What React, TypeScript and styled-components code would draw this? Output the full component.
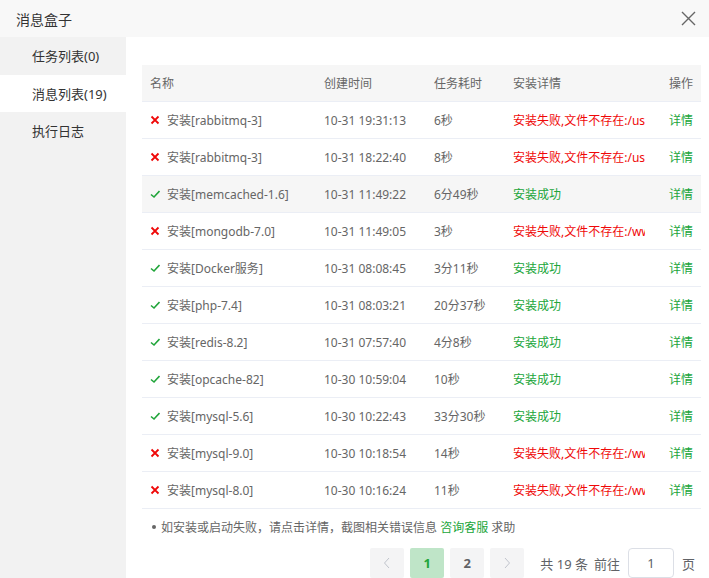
import styled, { createGlobalStyle } from 'styled-components';

const GlobalStyle = createGlobalStyle`
  html, body {
    margin: 0;
    padding: 0;
    overflow: hidden;
    background: #fff;
  }
  body {
    font-family: "Noto Sans", "Noto Sans CJK SC", sans-serif;
    font-size: 12px;
    color: #666;
  }
`;

const Dialog = styled.div`
  display: flex;
  flex-direction: column;
  width: 709px;
  height: 578px;
  overflow: hidden;
`;

const Header = styled.div`
  display: flex;
  align-items: center;
  justify-content: space-between;
  height: 37px;
  flex-shrink: 0;
  padding: 0 12px 0 16px;
  box-sizing: border-box;
  background: #f8f8f8;
  font-size: 14px;
  color: #333;
`;

const CloseButton = styled.button`
  display: flex;
  align-items: center;
  justify-content: center;
  width: 18px;
  height: 18px;
  padding: 0;
  border: none;
  background: none;
  cursor: pointer;
`;

const Body = styled.div`
  display: flex;
  flex: 1;
  min-height: 0;
`;

const Sidebar = styled.nav`
  width: 126px;
  flex-shrink: 0;
  background: #f2f2f2;
`;

const Tab = styled.div<{ $active?: boolean }>`
  height: 37.5px;
  display: flex;
  align-items: center;
  padding-left: 32px;
  font-size: 13px;
  color: #333;
  background: ${(p) => (p.$active ? '#fff' : 'transparent')};
  cursor: pointer;
`;

const Main = styled.div`
  flex: 1;
  min-width: 0;
  padding: 28px 8px 0 16px;
  display: flex;
  flex-direction: column;
`;

const Table = styled.table`
  width: 559px;
  table-layout: fixed;
  border-collapse: collapse;
`;

const Th = styled.th<{ $right?: boolean }>`
  height: 36px;
  padding: 0 8px;
  background: #f6f6f6;
  font-weight: normal;
  color: #666;
  text-align: ${(p) => (p.$right ? 'right' : 'left')};
  border-bottom: 1px solid #ebeef5;
  white-space: nowrap;
`;

const Tr = styled.tr<{ $hover?: boolean }>`
  background: ${(p) => (p.$hover ? '#f6f6f6' : '#fff')};
`;

const Td = styled.td<{ $right?: boolean }>`
  height: 36px;
  padding: 0 8px;
  border-bottom: 1px solid #ebeef5;
  white-space: nowrap;
  overflow: hidden;
  text-align: ${(p) => (p.$right ? 'right' : 'left')};
  color: #666;
`;

const NameCell = styled.span`
  display: inline-flex;
  align-items: center;
  gap: 7px;
`;

const Detail = styled.div<{ $ok: boolean }>`
  overflow: hidden;
  white-space: nowrap;
  color: ${(p) => (p.$ok ? '#20a53a' : '#ef0808')};
`;

const Link = styled.a`
  color: #20a53a;
  text-decoration: none;
  cursor: pointer;
`;

const Note = styled.div`
  display: flex;
  align-items: center;
  gap: 5px;
  margin-top: 8px;
  padding-left: 10px;
  height: 20px;
  color: #666;
`;

const Dot = styled.span`
  width: 4px;
  height: 4px;
  border-radius: 50%;
  background: #666;
`;

const Pager = styled.div`
  display: flex;
  align-items: center;
  justify-content: flex-end;
  margin-top: 12px;
  margin-right: 6px;
  height: 30px;
  font-size: 13px;
  color: #606266;
`;

const PageBtn = styled.button<{ $active?: boolean }>`
  width: 34px;
  height: 30px;
  margin-right: 6px;
  border: none;
  border-radius: 2px;
  padding: 0;
  display: flex;
  align-items: center;
  justify-content: center;
  font-family: inherit;
  font-size: 13px;
  font-weight: bold;
  background: ${(p) => (p.$active ? '#bfe5c8' : '#f4f4f5')};
  color: ${(p) => (p.$active ? '#20a53a' : '#606266')};
  cursor: pointer;
`;

const Total = styled.span`
  margin-left: 10px;
  margin-right: 6px;
`;

const JumpInput = styled.input`
  width: 46px;
  height: 30px;
  box-sizing: border-box;
  margin: 0 8px;
  border: 1px solid #dcdfe6;
  border-radius: 4px;
  text-align: center;
  font-family: inherit;
  font-size: 13px;
  color: #606266;
  outline: none;
`;

const Cross = () => (
  <svg width="10" height="10" viewBox="0 0 10 10">
    <path d="M1.5 1.5 L8.5 8.5 M8.5 1.5 L1.5 8.5" stroke="#ef0808" strokeWidth="1.8" />
  </svg>
);

const Check = () => (
  <svg width="10" height="10" viewBox="0 0 10 10">
    <path d="M1 5.5 L4 8 L9.5 2" stroke="#20a53a" strokeWidth="1.6" fill="none" />
  </svg>
);

const Chevron = ({ dir }: { dir: 'left' | 'right' }) => (
  <svg width="8" height="12" viewBox="0 0 8 12">
    <path
      d={dir === 'left' ? 'M6 1 L1.5 6 L6 11' : 'M2 1 L6.5 6 L2 11'}
      stroke="#c0c4cc"
      strokeWidth="1"
      fill="none"
    />
  </svg>
);

type Row = { ok: boolean; name: string; time: string; cost: string; path?: string };

const rows: Row[] = [
  { ok: false, name: 'rabbitmq-3', time: '10-31 19:31:13', cost: '6秒', path: '/usr/local/rabbitmq' },
  { ok: false, name: 'rabbitmq-3', time: '10-31 18:22:40', cost: '8秒', path: '/usr/local/rabbitmq' },
  { ok: true, name: 'memcached-1.6', time: '10-31 11:49:22', cost: '6分49秒' },
  { ok: false, name: 'mongodb-7.0', time: '10-31 11:49:05', cost: '3秒', path: '/www/server/mongodb' },
  { ok: true, name: 'Docker服务', time: '10-31 08:08:45', cost: '3分11秒' },
  { ok: true, name: 'php-7.4', time: '10-31 08:03:21', cost: '20分37秒' },
  { ok: true, name: 'redis-8.2', time: '10-31 07:57:40', cost: '4分8秒' },
  { ok: true, name: 'opcache-82', time: '10-30 10:59:04', cost: '10秒' },
  { ok: true, name: 'mysql-5.6', time: '10-30 10:22:43', cost: '33分30秒' },
  { ok: false, name: 'mysql-9.0', time: '10-30 10:18:54', cost: '14秒', path: '/www/server/mysql' },
  { ok: false, name: 'mysql-8.0', time: '10-30 10:16:24', cost: '11秒', path: '/www/server/mysql' },
];

const tabs = ['任务列表(0)', '消息列表(19)', '执行日志'];

export default function App() {
  return (
    <Dialog>
      <GlobalStyle />
      <Header>
        <span>消息盒子</span>
        <CloseButton aria-label="关闭">
          <svg width="15" height="15" viewBox="0 0 15 15">
            <path d="M1 1 L14 14 M14 1 L1 14" stroke="#666" strokeWidth="1.4" />
          </svg>
        </CloseButton>
      </Header>
      <Body>
        <Sidebar>
          {tabs.map((t, i) => (
            <Tab key={t} $active={i === 1}>
              {t}
            </Tab>
          ))}
        </Sidebar>
        <Main>
          <Table>
            <colgroup>
              <col style={{ width: 174 }} />
              <col style={{ width: 110 }} />
              <col style={{ width: 79 }} />
              <col style={{ width: 148 }} />
              <col style={{ width: 48 }} />
            </colgroup>
            <thead>
              <tr>
                <Th>名称</Th>
                <Th>创建时间</Th>
                <Th>任务耗时</Th>
                <Th>安装详情</Th>
                <Th $right>操作</Th>
              </tr>
            </thead>
            <tbody>
              {rows.map((r, i) => (
                <Tr key={i} $hover={i === 2}>
                  <Td>
                    <NameCell>
                      {r.ok ? <Check /> : <Cross />}
                      安装[{r.name}]
                    </NameCell>
                  </Td>
                  <Td>{r.time}</Td>
                  <Td>{r.cost}</Td>
                  <Td>
                    <Detail $ok={r.ok}>
                      {r.ok ? '安装成功' : `安装失败,文件不存在:${r.path}`}
                    </Detail>
                  </Td>
                  <Td $right>
                    <Link>详情</Link>
                  </Td>
                </Tr>
              ))}
            </tbody>
          </Table>
          <Note>
            <Dot />
            <span>
              如安装或启动失败，请点击详情，截图相关错误信息 <Link>咨询客服</Link> 求助
            </span>
          </Note>
          <Pager>
            <PageBtn>
              <Chevron dir="left" />
            </PageBtn>
            <PageBtn $active>1</PageBtn>
            <PageBtn>2</PageBtn>
            <PageBtn>
              <Chevron dir="right" />
            </PageBtn>
            <Total>共 19 条</Total>
            <span>前往</span>
            <JumpInput defaultValue="1" />
            <span>页</span>
          </Pager>
        </Main>
      </Body>
    </Dialog>
  );
}
